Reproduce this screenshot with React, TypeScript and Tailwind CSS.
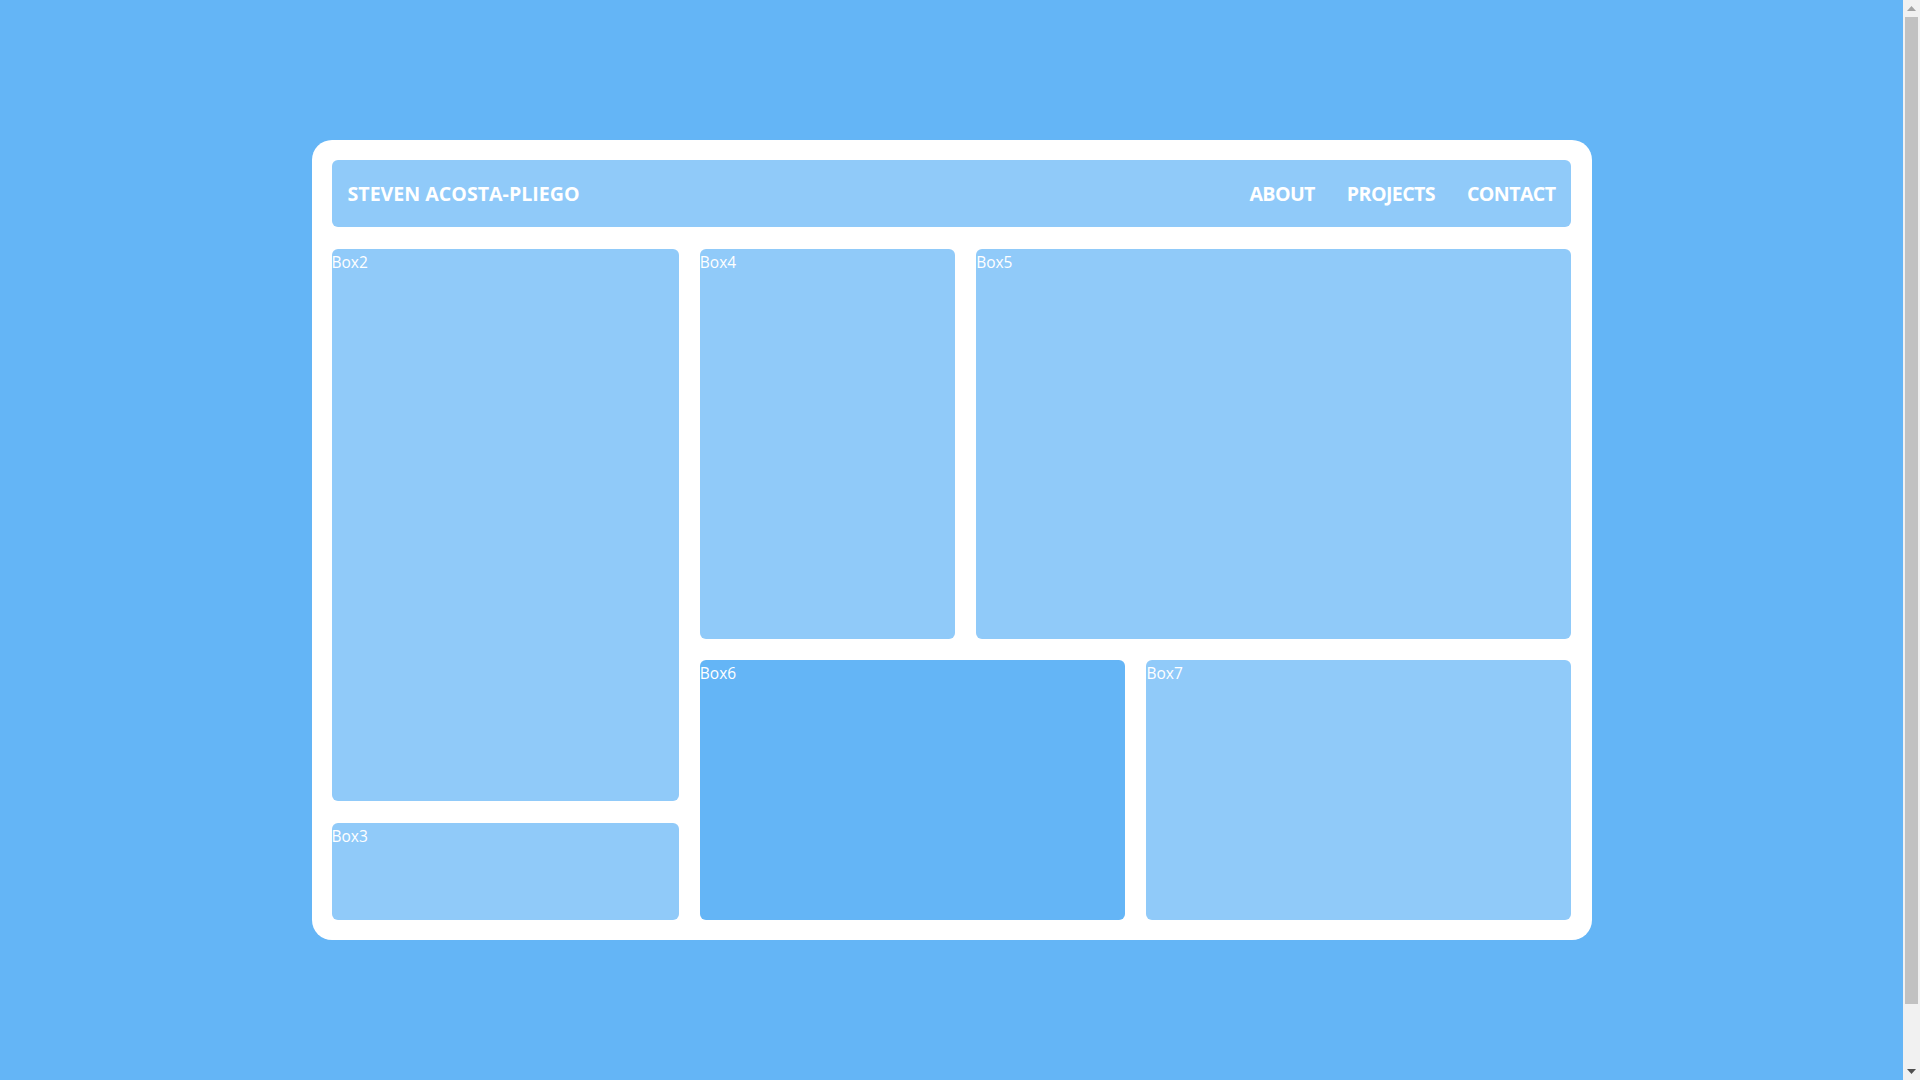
import * as React from "react"

const boxes = [
  { label: "Box2", area: "col-start-1 col-end-2 row-start-2 row-end-4", tone: "bg-[#90caf9]" },
  { label: "Box3", area: "col-start-1 col-end-2 row-start-4 row-end-5", tone: "bg-[#90caf9]" },
  { label: "Box4", area: "col-start-2 col-end-3 row-start-2 row-end-3", tone: "bg-[#90caf9]" },
  { label: "Box5", area: "col-start-3 col-end-5 row-start-2 row-end-3", tone: "bg-[#90caf9]" },
  { label: "Box6", area: "col-start-2 col-end-4 row-start-3 row-end-5", tone: "bg-[#64b5f6]" },
  { label: "Box7", area: "col-start-4 col-end-5 row-start-3 row-end-5", tone: "bg-[#90caf9]" },
] as const

const links = ["ABOUT", "PROJECTS", "CONTACT"]

// window scrollbar as it shows in the screenshot
function Scrollbar() {
  return (
    <div className="fixed top-0 right-0 flex h-screen w-[17px] flex-col items-center bg-[#f1f1f1]">
      <div className="flex h-[17px] w-full items-center justify-center">
        <svg width="9" height="5" viewBox="0 0 9 5">
          <path d="M0 5 L4.5 0 L9 5 Z" fill="#a3a3a3" />
        </svg>
      </div>
      <div className="h-[987px] w-[13px] bg-[#c1c1c1]" />
      <div className="flex-1" />
      <div className="flex h-[17px] w-full items-center justify-center">
        <svg width="9" height="5" viewBox="0 0 9 5">
          <path d="M0 0 L9 0 L4.5 5 Z" fill="#505050" />
        </svg>
      </div>
    </div>
  )
}

export default function App() {
  return (
    <div
      className="bg-[#64b5f6] pt-[140px] pb-[204px] pr-[17px] text-white"
      style={{ fontFamily: '"Open Sans", "Noto Sans", sans-serif' }}
    >
      <div className="mx-auto w-[1280px] h-[800px] bg-white rounded-[20px] p-5">
        <div className="grid h-full grid-cols-[347fr_255fr_149fr_425fr] grid-rows-[67fr_390fr_141fr_97fr] gap-x-[21.3px] gap-y-[21.6px]">
          <header className="col-span-4 flex items-center justify-between rounded-[6px] bg-[#90caf9] px-4">
            <h1 className="text-[19.6px] font-bold">STEVEN ACOSTA-PLIEGO</h1>
            <nav className="flex gap-8">
              {links.map((link) => (
                <a key={link} href="#" className="text-[19.6px] font-bold tracking-[-0.6px]">
                  {link}
                </a>
              ))}
            </nav>
          </header>

          {boxes.map(({ label, area, tone }) => (
            <div key={label} className={`${area} ${tone} rounded-[6px] pt-[2px] text-[15.5px] leading-[22px]`}>
              {label}
            </div>
          ))}
        </div>
      </div>
      <Scrollbar />
    </div>
  )
}
